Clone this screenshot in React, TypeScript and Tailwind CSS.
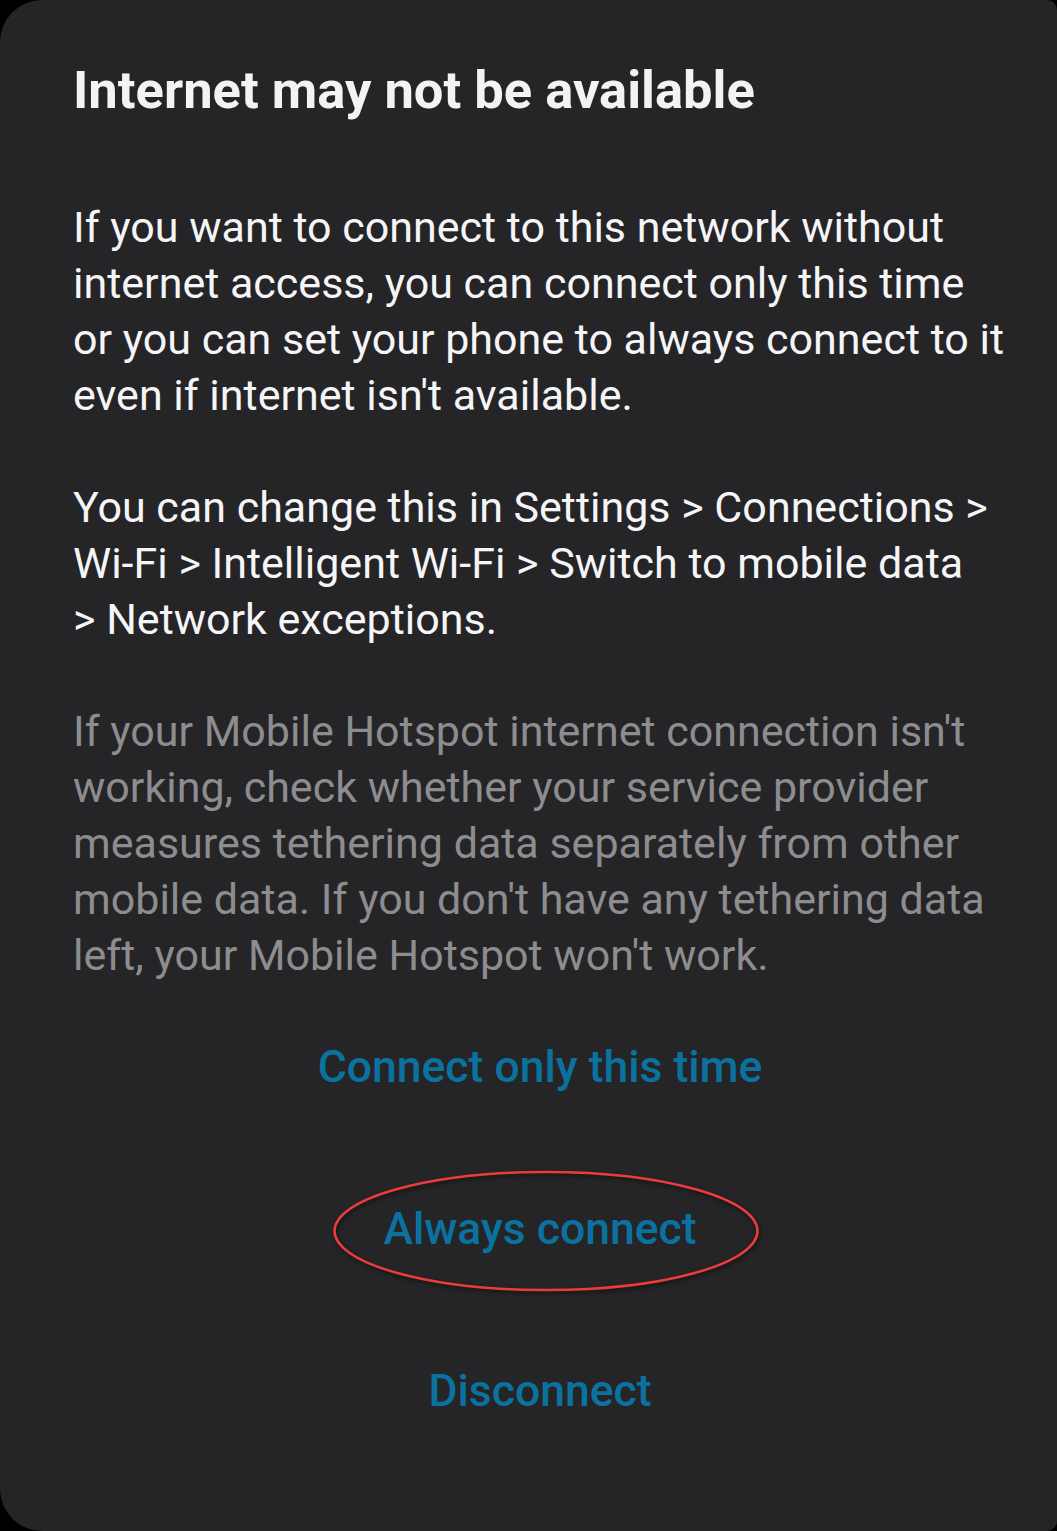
export default function App() {
  const body = { fontFamily: "Roboto, 'Noto Sans', sans-serif" };
  return (
    <div className="bg-black w-[1057px] h-[1531px] overflow-hidden">
      <div
        className="bg-[#252527] h-[1531px] rounded-l-[42px] rounded-r-[10px] pl-[73px] pr-[50px] pt-[58px] flex flex-col"
        style={body}
      >
        <h1 className="text-[52.5px] leading-[64px] font-bold text-[#f3f3f5] tracking-[0px]">
          Internet may not be available
        </h1>

        <div className="mt-[77px] text-[43px] leading-[56px] text-[#f5f5f7] flex flex-col gap-[56px] whitespace-nowrap">
          <p>
            If you want to connect to this network without
            <br />
            internet access, you can connect only this time
            <br />
            or you can set your phone to always connect to it
            <br />
            even if internet isn't available.
          </p>
          <p>
            You can change this in Settings &gt; Connections &gt;
            <br />
            Wi-Fi &gt; Intelligent Wi-Fi &gt; Switch to mobile data
            <br />
            &gt; Network exceptions.
          </p>
          <p className="text-[#8d8d90]">
            If your Mobile Hotspot internet connection isn't
            <br />
            working, check whether your service provider
            <br />
            measures tethering data separately from other
            <br />
            mobile data. If you don't have any tethering data
            <br />
            left, your Mobile Hotspot won't work.
          </p>
        </div>

        <div className="mt-[3px] flex flex-col text-[44.5px] font-medium text-[#0b72a0]">
          <div className="h-[162px] flex items-center justify-center">
            <span className="leading-[56px]">Connect only this time</span>
          </div>
          <div className="relative h-[162px] flex items-center justify-center">
            <span className="leading-[56px]">Always connect</span>
            <svg
              className="absolute left-[258px] top-[21px] pointer-events-none"
              width="432"
              height="126"
              viewBox="0 0 432 126"
              style={{ filter: "drop-shadow(1px 2px 2px rgba(0,0,0,0.6))" }}
            >
              <ellipse cx="215" cy="62" rx="211.5" ry="59" fill="none" stroke="#ec3b3b" strokeWidth="2.5" />
            </svg>
          </div>
          <div className="h-[162px] flex items-center justify-center">
            <span className="leading-[56px]">Disconnect</span>
          </div>
        </div>
      </div>
    </div>
  );
}
